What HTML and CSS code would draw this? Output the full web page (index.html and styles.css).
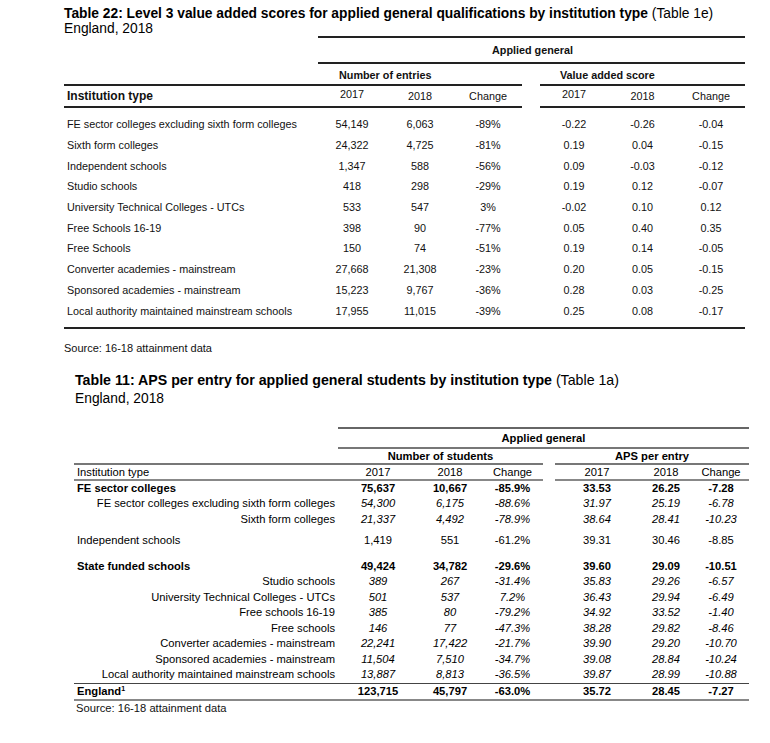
FILE: index.html
```html
<!DOCTYPE html>
<html>
<head>
<meta charset="utf-8">
<link rel="stylesheet" href="styles.css">
</head>
<body>
<section class="t1">
  <h1 class="t1-title"><b>Table 22: Level 3 value added scores for applied general qualifications by institution type</b> (Table 1e)<br>England, 2018</h1>
  <div class="g1 g1-a"><div class="span-all">Applied general</div></div>
  <div class="g1 g1-b">
    <div class="grp1">Number of entries</div>
    <div class="grp2">Value added score</div>
  </div>
  <div class="g1 g1-c">
    <div class="lbl hd">Institution type</div>
    <div class="num raise">2017</div><div class="num">2018</div><div class="num">Change</div>
    <div class="gap"></div>
    <div class="num raise">2017</div><div class="num">2018</div><div class="num">Change</div>
  </div>
  <div class="g1-body">
    <div class="g1 r"><div class="lbl">FE sector colleges excluding sixth form colleges</div><div class="num">54,149</div><div class="num">6,063</div><div class="num">-89%</div><div class="gap"></div><div class="num">-0.22</div><div class="num">-0.26</div><div class="num">-0.04</div></div>
    <div class="g1 r"><div class="lbl">Sixth form colleges</div><div class="num">24,322</div><div class="num">4,725</div><div class="num">-81%</div><div class="gap"></div><div class="num">0.19</div><div class="num">0.04</div><div class="num">-0.15</div></div>
    <div class="g1 r"><div class="lbl">Independent schools</div><div class="num">1,347</div><div class="num">588</div><div class="num">-56%</div><div class="gap"></div><div class="num">0.09</div><div class="num">-0.03</div><div class="num">-0.12</div></div>
    <div class="g1 r"><div class="lbl">Studio schools</div><div class="num">418</div><div class="num">298</div><div class="num">-29%</div><div class="gap"></div><div class="num">0.19</div><div class="num">0.12</div><div class="num">-0.07</div></div>
    <div class="g1 r"><div class="lbl">University Technical Colleges - UTCs</div><div class="num">533</div><div class="num">547</div><div class="num">3%</div><div class="gap"></div><div class="num">-0.02</div><div class="num">0.10</div><div class="num">0.12</div></div>
    <div class="g1 r"><div class="lbl">Free Schools 16-19</div><div class="num">398</div><div class="num">90</div><div class="num">-77%</div><div class="gap"></div><div class="num">0.05</div><div class="num">0.40</div><div class="num">0.35</div></div>
    <div class="g1 r"><div class="lbl">Free Schools</div><div class="num">150</div><div class="num">74</div><div class="num">-51%</div><div class="gap"></div><div class="num">0.19</div><div class="num">0.14</div><div class="num">-0.05</div></div>
    <div class="g1 r"><div class="lbl">Converter academies - mainstream</div><div class="num">27,668</div><div class="num">21,308</div><div class="num">-23%</div><div class="gap"></div><div class="num">0.20</div><div class="num">0.05</div><div class="num">-0.15</div></div>
    <div class="g1 r"><div class="lbl">Sponsored academies - mainstream</div><div class="num">15,223</div><div class="num">9,767</div><div class="num">-36%</div><div class="gap"></div><div class="num">0.28</div><div class="num">0.03</div><div class="num">-0.25</div></div>
    <div class="g1 r"><div class="lbl">Local authority maintained mainstream schools</div><div class="num">17,955</div><div class="num">11,015</div><div class="num">-39%</div><div class="gap"></div><div class="num">0.25</div><div class="num">0.08</div><div class="num">-0.17</div></div>
  </div>
  <p class="src1">Source: 16-18 attainment data</p>
</section>

<section class="t2">
  <h2 class="t2-title"><span class="t2-main"><b>Table 11: APS per entry for applied general students by institution type</b> (Table 1a)</span><br>England, 2018</h2>
  <div class="g2 g2-a"><div class="span-all">Applied general</div></div>
  <div class="g2 g2-b">
    <div class="blank"></div>
    <div class="grp1">Number of students</div>
    <div class="gap"></div>
    <div class="grp2">APS per entry</div>
  </div>
  <div class="g2 g2-c">
    <div class="lbl">Institution type</div>
    <div class="num">2017</div><div class="num">2018</div><div class="num">Change</div>
    <div class="gap"></div>
    <div class="num">2017</div><div class="num">2018</div><div class="num">Change</div>
  </div>
  <div class="g2-body">
    <div class="g2 r bold"><div class="lbl">FE sector colleges</div><div class="num">75,637</div><div class="num">10,667</div><div class="num">-85.9%</div><div class="gap"></div><div class="num">33.53</div><div class="num">26.25</div><div class="num">-7.28</div></div>
    <div class="g2 r it"><div class="lbl sub">FE sector colleges excluding sixth form colleges</div><div class="num">54,300</div><div class="num">6,175</div><div class="num">-88.6%</div><div class="gap"></div><div class="num">31.97</div><div class="num">25.19</div><div class="num">-6.78</div></div>
    <div class="g2 r it"><div class="lbl sub">Sixth form colleges</div><div class="num">21,337</div><div class="num">4,492</div><div class="num">-78.9%</div><div class="gap"></div><div class="num">38.64</div><div class="num">28.41</div><div class="num">-10.23</div></div>
    <div class="g2 r indep"><div class="lbl">Independent schools</div><div class="num">1,419</div><div class="num">551</div><div class="num">-61.2%</div><div class="gap"></div><div class="num">39.31</div><div class="num">30.46</div><div class="num">-8.85</div></div>
    <div class="g2 r bold state"><div class="lbl">State funded schools</div><div class="num">49,424</div><div class="num">34,782</div><div class="num">-29.6%</div><div class="gap"></div><div class="num">39.60</div><div class="num">29.09</div><div class="num">-10.51</div></div>
    <div class="g2 r it"><div class="lbl sub">Studio schools</div><div class="num">389</div><div class="num">267</div><div class="num">-31.4%</div><div class="gap"></div><div class="num">35.83</div><div class="num">29.26</div><div class="num">-6.57</div></div>
    <div class="g2 r it"><div class="lbl sub">University Technical Colleges - UTCs</div><div class="num">501</div><div class="num">537</div><div class="num">7.2%</div><div class="gap"></div><div class="num">36.43</div><div class="num">29.94</div><div class="num">-6.49</div></div>
    <div class="g2 r it"><div class="lbl sub">Free schools 16-19</div><div class="num">385</div><div class="num">80</div><div class="num">-79.2%</div><div class="gap"></div><div class="num">34.92</div><div class="num">33.52</div><div class="num">-1.40</div></div>
    <div class="g2 r it"><div class="lbl sub">Free schools</div><div class="num">146</div><div class="num">77</div><div class="num">-47.3%</div><div class="gap"></div><div class="num">38.28</div><div class="num">29.82</div><div class="num">-8.46</div></div>
    <div class="g2 r it"><div class="lbl sub">Converter academies - mainstream</div><div class="num">22,241</div><div class="num">17,422</div><div class="num">-21.7%</div><div class="gap"></div><div class="num">39.90</div><div class="num">29.20</div><div class="num">-10.70</div></div>
    <div class="g2 r it"><div class="lbl sub">Sponsored academies - mainstream</div><div class="num">11,504</div><div class="num">7,510</div><div class="num">-34.7%</div><div class="gap"></div><div class="num">39.08</div><div class="num">28.84</div><div class="num">-10.24</div></div>
    <div class="g2 r it"><div class="lbl sub">Local authority maintained mainstream schools</div><div class="num">13,887</div><div class="num">8,813</div><div class="num">-36.5%</div><div class="gap"></div><div class="num">39.87</div><div class="num">28.99</div><div class="num">-10.88</div></div>
  </div>
  <div class="g2 r bold total"><div class="lbl">England<sup>1</sup></div><div class="num">123,715</div><div class="num">45,797</div><div class="num">-63.0%</div><div class="gap"></div><div class="num">35.72</div><div class="num">28.45</div><div class="num">-7.27</div></div>
  <p class="src2">Source: 16-18 attainment data</p>
</section>
</body>
</html>
```

FILE: styles.css
```css
* { box-sizing: border-box; }
html, body { margin: 0; padding: 0; background: #fff; }
body {
  font-family: "Liberation Sans", Arial, sans-serif;
  color: #111;
  width: 770px;
}

/* ---------- Table 1 ---------- */
.t1 { padding-left: 64px; }
.t1-title {
  margin: 0;
  padding-top: 6px;
  font-size: 13.8px;
  line-height: 15px;
  font-weight: normal;
  color: #000;
}
.t1-title b { font-weight: bold; }

.g1 {
  display: grid;
  grid-template-columns: 254px 68px 68px 68px 18px 68px 69px 68px;
  width: 681px;
  font-size: 10.8px;
  align-items: center;
}
.g1-a { height: 28px; }
.g1-a .span-all {
  grid-column: 2 / -1;
  height: 28px;
  border-top: 2px solid #222;
  border-bottom: 2px solid #222;
  display: flex; align-items: center; justify-content: center;
  font-weight: bold;
  padding-left: 2px;
}
.g1-b { height: 20px; font-weight: bold; padding-top: 2px; }
.g1-b .grp1 { grid-column: 2 / 5; padding-left: 21px; }
.g1-b .grp2 { grid-column: 6 / 9; padding-left: 20px; }

.g1-c { height: 24px; }
.g1-c > div {
  height: 24px;
  border-top: 2px solid #222;
  border-bottom: 2px solid #222;
  display: flex; align-items: center; justify-content: center;
}
.g1-c > .gap { border: 0; }
.g1-c > .lbl { justify-content: flex-start; padding-left: 2px; }
.g1-c .hd { font-weight: bold; font-size: 12px; }
.g1-c .raise { padding-bottom: 5px; }

.g1-body {
  width: 681px;
  padding: 6px 0 6px;
  border-bottom: 2px solid #222;
}
.g1.r { height: 20.7px; }
.g1 .lbl { padding-left: 3px; }
.g1 .num { text-align: center; }

.src1 {
  margin: 12px 0 0;
  font-size: 11px;
  line-height: 15px;
}

/* ---------- Table 2 ---------- */
.t2 { padding-left: 74px; }
.t2-title {
  margin: 15px 0 0 1px;
  font-size: 13.8px;
  line-height: 18px;
  font-weight: normal;
  color: #000;
}
.t2-main { font-size: 14.2px; }
.t2-title b { font-weight: bold; }

.g2 {
  display: grid;
  grid-template-columns: 264px 80px 64px 61px 12px 84px 54px 56px;
  width: 675px;
  font-size: 11.2px;
  align-items: center;
  color: #000;
}
.g2-a { margin-top: 19px; }
.g2-a .span-all {
  grid-column: 2 / -1;
  height: 22px;
  border-top: 2px solid #666;
  border-bottom: 2px solid #777;
  display: flex; align-items: center; justify-content: center;
  font-weight: bold;
}
.g2-b { height: 14px; font-weight: bold; }
.g2-b .grp1 { grid-column: 2 / 5; text-align: center; }
.g2-b .grp2 { grid-column: 6 / 9; text-align: center; }

.g2-c > div {
  height: 18px;
  border-top: 2px solid #777;
  border-bottom: 2px solid #888;
  display: flex; align-items: center; justify-content: center;
}
.g2-c > .gap { border: 0; }
.g2-c > .lbl { justify-content: flex-start; padding-left: 3px; }

.g2.r { height: 15.5px; line-height: 15.5px; }
.g2 .lbl { padding-left: 3px; white-space: nowrap; }
.g2 .lbl.sub { text-align: right; padding-right: 3px; font-style: normal; }
.g2 .num { text-align: center; }
.g2.bold { font-weight: bold; }
.g2.it .num { font-style: italic; }
.g2.indep { margin-top: 5.5px; }
.g2.state { margin-top: 10.5px; }

.g2.total {
  height: 18px;
  margin-top: 0.5px;
  border-top: 1.5px solid #444;
  border-bottom: 2px solid #888;
}
.g2.total sup { font-size: 7px; vertical-align: 4px; line-height: 0; }

.src2 {
  margin: 0;
  font-size: 11.2px;
  line-height: 15px;
  padding-left: 2px;
}
```
